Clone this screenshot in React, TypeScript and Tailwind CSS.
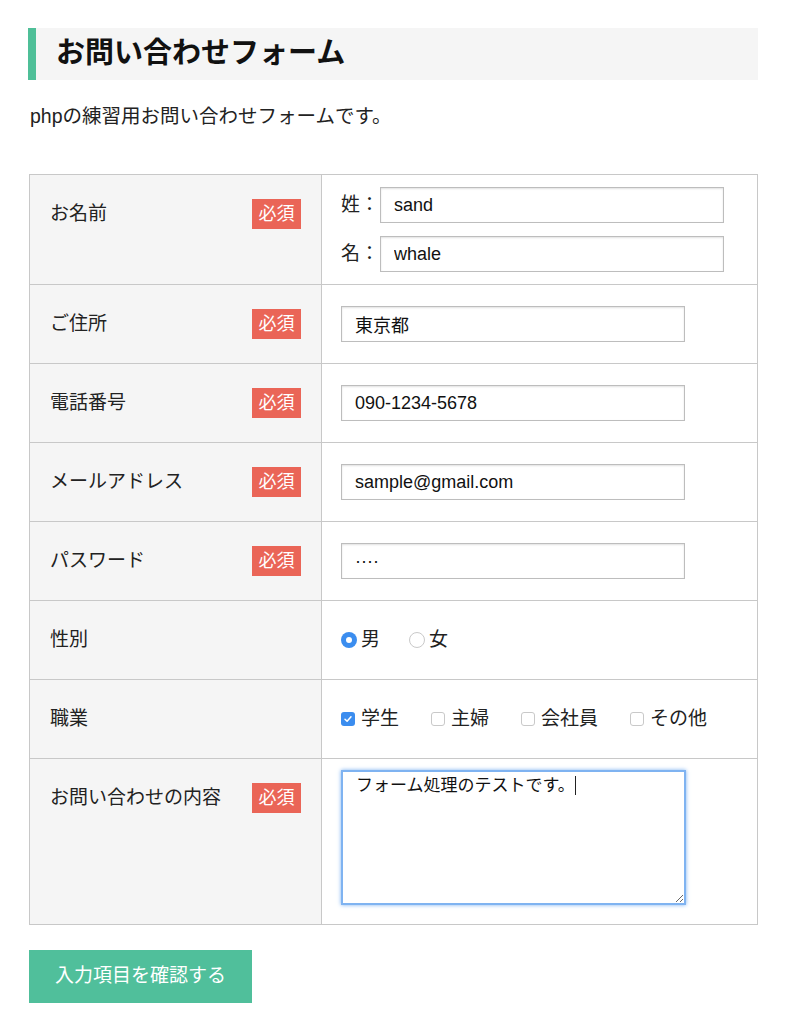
import React from 'react';

const font = { fontFamily: '"Liberation Sans", "Noto Sans CJK JP", sans-serif' };

const Required = () => (
  <span className="inline-flex h-[30px] w-[49px] items-center justify-center bg-[#ea6557] text-[18px] leading-none text-white">
    必須
  </span>
);

const Label = ({ text, required }: { text: string; required?: boolean }) => (
  <div className="flex w-[292px] shrink-0 items-start justify-between bg-[#f5f5f5] pl-[20px] pr-[20px] pt-[24px] border-r border-[#c8c8c8]">
    <span className="flex h-[30px] items-center text-[19px] text-[#222]">{text}</span>
    {required && <Required />}
  </div>
);

const TextBox = ({ value, className = '' }: { value: string; className?: string }) => (
  <input
    readOnly
    defaultValue={value}
    className={`h-[36px] border border-[#bdbdbd] bg-white px-[13px] text-[18px] text-[#111] shadow-[inset_0_1px_2px_rgba(0,0,0,0.12)] outline-none ${className}`}
    style={font}
  />
);

const Radio = ({ checked, label }: { checked?: boolean; label: string }) => (
  <span className="flex items-center gap-[4px] text-[19px] text-[#222]">
    {checked ? (
      <span className="flex h-[16px] w-[16px] items-center justify-center rounded-full bg-[#3b8def]">
        <span className="h-[6px] w-[6px] rounded-full bg-white" />
      </span>
    ) : (
      <span className="h-[16px] w-[16px] rounded-full border border-[#c9c9c9] bg-white" />
    )}
    {label}
  </span>
);

const Check = ({ checked, label }: { checked?: boolean; label: string }) => (
  <span className="flex items-center gap-[6px] text-[19px] text-[#222]">
    {checked ? (
      <span className="flex h-[14px] w-[14px] items-center justify-center rounded-[3px] bg-[#3b8def]">
        <svg width="10" height="10" viewBox="0 0 10 10" fill="none">
          <path d="M2 5.2 L4.1 7.3 L8 2.8" stroke="white" strokeWidth="1.5" strokeLinecap="round" strokeLinejoin="round" />
        </svg>
      </span>
    ) : (
      <span className="h-[14px] w-[14px] rounded-[3px] border border-[#c9c9c9] bg-white" />
    )}
    {label}
  </span>
);

export default function App() {
  return (
    <div className="min-h-screen bg-white pl-[28px] pt-[28px] text-[#222]" style={font}>
      <div className="w-[730px]">
        <h1 className="flex h-[52px] items-center border-l-[8px] border-[#4fbf98] bg-[#f5f5f5] pl-[20px] text-[29px] font-bold text-[#111]">
          お問い合わせフォーム
        </h1>
        <p className="ml-[2px] mt-[23px] text-[19.5px] leading-[26px]">phpの練習用お問い合わせフォームです。</p>

        <div className="ml-[1px] mt-[45px] w-[729px] border border-[#c8c8c8]">
          {/* name */}
          <div className="flex border-b border-[#c8c8c8]">
            <Label text="お名前" required />
            <div className="flex flex-1 flex-col gap-[13px] bg-white pl-[19px] pt-[12px] pb-[12px]">
              <div className="flex items-center">
                <span className="w-[39px] text-[19px]">姓：</span>
                <TextBox value="sand" className="h-[35px] w-[344px]" />
              </div>
              <div className="flex items-center">
                <span className="w-[39px] text-[19px]">名：</span>
                <TextBox value="whale" className="h-[35px] w-[344px]" />
              </div>
            </div>
          </div>

          {[
            ['ご住所', '東京都'],
            ['電話番号', '090-1234-5678'],
            ['メールアドレス', 'sample@gmail.com'],
            ['パスワード', '····'],
          ].map(([label, value]) => (
            <div key={label} className="flex border-b border-[#c8c8c8]">
              <Label text={label} required />
              <div className="flex flex-1 bg-white py-[21px] pl-[19px]">
                <TextBox value={value} className="w-[344px]" />
              </div>
            </div>
          ))}

          {/* gender */}
          <div className="flex h-[79px] border-b border-[#c8c8c8]">
            <Label text="性別" />
            <div className="flex flex-1 items-center gap-[29px] bg-white pl-[19px]">
              <Radio checked label="男" />
              <Radio label="女" />
            </div>
          </div>

          {/* job */}
          <div className="flex h-[79px] border-b border-[#c8c8c8]">
            <Label text="職業" />
            <div className="flex flex-1 items-center gap-[32px] bg-white pl-[19px]">
              <Check checked label="学生" />
              <Check label="主婦" />
              <Check label="会社員" />
              <Check label="その他" />
            </div>
          </div>

          {/* message */}
          <div className="flex">
            <Label text="お問い合わせの内容" required />
            <div className="flex flex-1 bg-white pb-[19px] pl-[19px] pt-[11px]">
              <div className="relative">
                <textarea
                  readOnly
                  defaultValue="フォーム処理のテストです。"
                  className="block h-[135px] w-[345px] resize border-2 border-[#7fb3f1] bg-white px-[13px] py-[2px] text-[17px] leading-[24px] text-[#111] shadow-[0_0_4px_#7ab0f0] outline-none"
                  style={font}
                />
                <span className="absolute left-[234px] top-[6px] h-[19px] w-[1px] bg-[#222]" />
              </div>
            </div>
          </div>
        </div>

        <button
          className="ml-[1px] mt-[25px] flex h-[53px] w-[223px] items-center justify-center bg-[#50bf9b] text-[19px] text-white"
          style={font}
        >
          入力項目を確認する
        </button>
      </div>
    </div>
  );
}
